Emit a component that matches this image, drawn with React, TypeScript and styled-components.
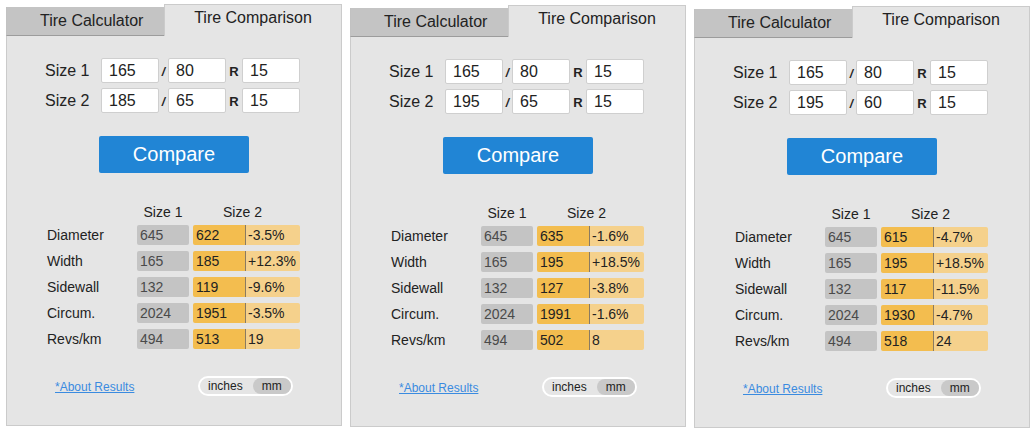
import styled, { createGlobalStyle } from 'styled-components'

type Row = { label: string; a: string; b: string; diff: string }
type Calc = {
  top: number
  size1: [string, string, string]
  size2: [string, string, string]
  rows: Row[]
}

const calcs: Calc[] = [
  {
    top: 4,
    size1: ['165', '80', '15'],
    size2: ['185', '65', '15'],
    rows: [
      { label: 'Diameter', a: '645', b: '622', diff: '-3.5%' },
      { label: 'Width', a: '165', b: '185', diff: '+12.3%' },
      { label: 'Sidewall', a: '132', b: '119', diff: '-9.6%' },
      { label: 'Circum.', a: '2024', b: '1951', diff: '-3.5%' },
      { label: 'Revs/km', a: '494', b: '513', diff: '19' },
    ],
  },
  {
    top: 5,
    size1: ['165', '80', '15'],
    size2: ['195', '65', '15'],
    rows: [
      { label: 'Diameter', a: '645', b: '635', diff: '-1.6%' },
      { label: 'Width', a: '165', b: '195', diff: '+18.5%' },
      { label: 'Sidewall', a: '132', b: '127', diff: '-3.8%' },
      { label: 'Circum.', a: '2024', b: '1991', diff: '-1.6%' },
      { label: 'Revs/km', a: '494', b: '502', diff: '8' },
    ],
  },
  {
    top: 6,
    size1: ['165', '80', '15'],
    size2: ['195', '60', '15'],
    rows: [
      { label: 'Diameter', a: '645', b: '615', diff: '-4.7%' },
      { label: 'Width', a: '165', b: '195', diff: '+18.5%' },
      { label: 'Sidewall', a: '132', b: '117', diff: '-11.5%' },
      { label: 'Circum.', a: '2024', b: '1930', diff: '-4.7%' },
      { label: 'Revs/km', a: '494', b: '518', diff: '24' },
    ],
  },
]

const SizeRow = ({ label, size }: { label: string; size: [string, string, string] }) => (
  <>
    <SizeLabel>{label}</SizeLabel>
    <SizeInput defaultValue={size[0]} />
    <Slash>/</Slash>
    <SizeInput defaultValue={size[1]} />
    <Rim>R</Rim>
    <SizeInput defaultValue={size[2]} />
  </>
)

const Calculator = ({ calc }: { calc: Calc }) => (
  <Panel $top={calc.top}>
    <Tabs>
      <Tab>Tire Calculator</Tab>
      <ActiveTab>Tire Comparison</ActiveTab>
    </Tabs>
    <Body>
      <SizeForm>
        <SizeRow label="Size 1" size={calc.size1} />
        <SizeRow label="Size 2" size={calc.size2} />
      </SizeForm>
      <CompareButton>Compare</CompareButton>
      <Results>
        <HeadRow>
          <span />
          <HeadCell>Size 1</HeadCell>
          <HeadCell $shift>Size 2</HeadCell>
        </HeadRow>
        {calc.rows.map((r) => (
          <ResultRow key={r.label}>
            <RowLabel>{r.label}</RowLabel>
            <BaseCell>{r.a}</BaseCell>
            <Pair>
              <NewCell>{r.b}</NewCell>
              <DiffCell>{r.diff}</DiffCell>
            </Pair>
          </ResultRow>
        ))}
      </Results>
      <Footer>
        <AboutLink href="#">*About Results</AboutLink>
        <UnitToggle>
          <Unit>inches</Unit>
          <Unit $active>mm</Unit>
        </UnitToggle>
      </Footer>
    </Body>
  </Panel>
)

export default function App() {
  return (
    <>
      <GlobalStyle />
      <Page>
        {calcs.map((c, i) => (
          <Calculator key={i} calc={c} />
        ))}
      </Page>
    </>
  )
}

const GlobalStyle = createGlobalStyle`
  body {
    margin: 0;
    background: #fff;
    font-family: "Liberation Sans", Arial, sans-serif;
    color: #222;
  }
`

const Page = styled.div`
  display: flex;
  gap: 8px;
  padding-left: 6px;
  width: 1032px;
  height: 432px;
  box-sizing: border-box;
`

const Panel = styled.div<{ $top: number }>`
  width: 336px;
  height: 422px;
  margin-top: ${(p) => p.$top}px;
  display: flex;
  flex-direction: column;
`

const Tabs = styled.div`
  display: flex;
  align-items: flex-end;
  height: 32px;
`

const Tab = styled.div`
  width: 158px;
  height: 29px;
  box-sizing: border-box;
  background: #c4c4c4;
  border-left: 1px solid #c2c2c2;
  border-bottom: 1px solid #9c9c9c;
  font-size: 16px;
  line-height: 28px;
  padding-left: 33px;
`

const ActiveTab = styled.div`
  flex: 1;
  height: 32px;
  box-sizing: border-box;
  background: #e5e5e5;
  border: 1px solid #cbcbcb;
  border-bottom: none;
  font-size: 16px;
  line-height: 18px;
  padding-top: 4px;
  text-align: center;
`

const Body = styled.div`
  flex: 1;
  background: #e5e5e5;
  border: 1px solid #cbcbcb;
  border-top: none;
  display: flex;
  flex-direction: column;
  padding-top: 22px;
`

const SizeForm = styled.div`
  display: grid;
  grid-template-columns: 56px 58px 9px 58px 16px 58px;
  grid-auto-rows: 25px;
  row-gap: 5px;
  align-items: center;
  margin-left: 38px;
`

const SizeLabel = styled.span`
  font-size: 16px;
`

const SizeInput = styled.input`
  width: 58px;
  height: 25px;
  box-sizing: border-box;
  border: 1px solid #cfcfcf;
  border-radius: 2px;
  background: #fff;
  padding: 0 0 0 7px;
  font-family: "Liberation Sans", Arial, sans-serif;
  font-size: 16px;
  color: #222;
  outline: none;
`

const Slash = styled.span`
  font-size: 12px;
  font-style: italic;
  font-weight: bold;
  text-align: center;
  padding-top: 3px;
`

const Rim = styled.span`
  font-size: 13px;
  font-weight: bold;
  text-align: center;
  padding-top: 2px;
`

const CompareButton = styled.button`
  align-self: center;
  margin-top: 23px;
  width: 150px;
  height: 37px;
  border: none;
  border-radius: 2px;
  background: #2185d5;
  color: #fff;
  font-family: "Liberation Sans", Arial, sans-serif;
  font-size: 20px;
  cursor: pointer;
`

const Results = styled.div`
  display: flex;
  flex-direction: column;
  gap: 6px;
  margin: 30px 0 0 40px;
`

const ResultRow = styled.div`
  display: grid;
  grid-template-columns: 90px 52px 111px;
  height: 20px;
  align-items: center;
  font-size: 14px;
`

const HeadRow = styled(ResultRow)`
  height: 17px;
  margin-bottom: -1px;
`

const HeadCell = styled.span<{ $shift?: boolean }>`
  text-align: center;
  padding-right: ${(p) => (p.$shift ? '4px' : '0')};
`

const RowLabel = styled.span`
  font-size: 14px;
`

const BaseCell = styled.span`
  height: 20px;
  line-height: 20px;
  padding-left: 3px;
  background: #c4c4c4;
  color: #4a4a4a;
  border-radius: 2px;
`

const Pair = styled.div`
  display: grid;
  grid-template-columns: 53px 54px;
  margin-left: 4px;
  height: 20px;
  line-height: 20px;
`

const NewCell = styled.span`
  background: #f3bd4f;
  padding-left: 3px;
  border-radius: 2px 0 0 2px;
  border-right: 1px solid #8a7b62;
`

const DiffCell = styled.span`
  background: #f5d18c;
  padding-left: 2px;
  border-radius: 0 2px 2px 0;
`

const Footer = styled.div`
  display: grid;
  grid-template-columns: 143px auto;
  align-items: center;
  margin: 27px 0 0 48px;
`

const AboutLink = styled.a`
  font-size: 12px;
  color: #3a8be0;
  text-decoration: underline;
  padding-top: 2px;
`

const UnitToggle = styled.div`
  display: flex;
  align-items: center;
  justify-self: start;
  height: 20px;
  box-sizing: border-box;
  border: 2px solid #fff;
  border-radius: 12px;
  padding-left: 8px;
  font-size: 12px;
`

const Unit = styled.span<{ $active?: boolean }>`
  height: 16px;
  line-height: 16px;
  padding: ${(p) => (p.$active ? '0 9px' : '0 10px 0 0')};
  background: ${(p) => (p.$active ? '#c9c9c9' : 'transparent')};
  border-radius: 10px;
`
